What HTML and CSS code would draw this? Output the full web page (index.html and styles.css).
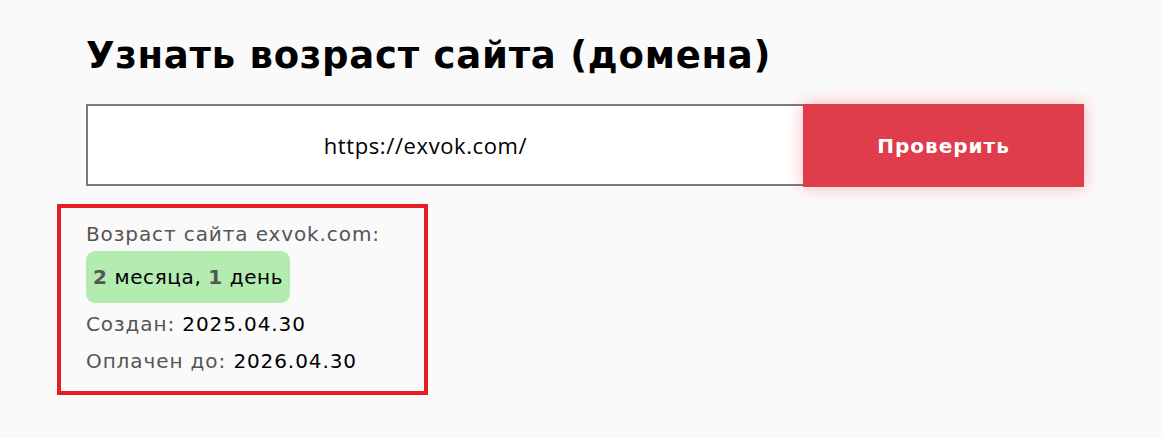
FILE: index.html
```html
<!DOCTYPE html>
<html lang="ru">
<head>
    <meta charset="UTF-8">
    <meta name="viewport" content="width=device-width, initial-scale=1.0">
    <title>Узнать возраст сайта</title>
    <link rel="stylesheet" href="styles.css">
</head>
<body>

<div class="page">
    <h1 class="title">Узнать возраст сайта (домена)</h1>

    <form class="checkForm" onsubmit="return false">
        <input type="text" class="domainInput" value="https://exvok.com/">
        <button type="submit" class="checkButton">Проверить</button>
    </form>

    <div class="result">
        <div class="resultLabel">Возраст сайта exvok.com:</div>
        <div class="ageBadge"><b>2</b> месяца, <b>1</b> день</div>
        <div class="resultRow">Создан: <span class="value">2025.04.30</span></div>
        <div class="resultRow">Оплачен до: <span class="value">2026.04.30</span></div>
    </div>
</div>

</body>
</html>
```

FILE: styles.css
```css
body {
    background: #fafafa;
    margin: 0;
    padding: 0;
    font-family: "DejaVu Sans", sans-serif;
    color: #000;
}

.page {
    padding: 26px 0 0 86px;
    width: 998px;
}

.title {
    font-size: 37px;
    font-weight: 700;
    letter-spacing: 0.75px;
    margin: 0 0 18px 0;
    line-height: 60px;
}

.checkForm {
    display: flex;
    height: 83px;
}

.domainInput {
    flex: 1;
    box-sizing: border-box;
    height: 82px;
    border: 2px solid #7a7a7a;
    border-right: none;
    background: #fff;
    font-family: "Open Sans", sans-serif;
    font-size: 22px;
    letter-spacing: 0.6px;
    text-align: center;
    padding: 0 40px 0 0;
    color: #000;
    outline: none;
}

.checkButton {
    width: 281px;
    height: 83px;
    background-color: #df3c4c;
    color: #fff;
    border: none;
    font-family: "DejaVu Sans", sans-serif;
    font-size: 20px;
    font-weight: 700;
    letter-spacing: 1px;
    box-shadow: 0 0 16px rgba(240, 60, 70, 0.35);
    cursor: pointer;
}

.result {
    display: inline-flex;
    flex-direction: column;
    align-items: flex-start;
    margin: 17px 0 0 -29px;
    padding: 13px 44px 11px 25px;
    border: 4px solid #e81c24;
    font-size: 20px;
    letter-spacing: 0.9px;
    color: #555;
}

.resultLabel {
    line-height: 26px;
}

.ageBadge {
    margin: 4px 0 3px 0;
    background: #b3ebb0;
    border-radius: 9px;
    padding: 0 7px;
    height: 52px;
    line-height: 52px;
    font-size: 20px;
    letter-spacing: 0.6px;
    color: #000;
}

.ageBadge b {
    color: #555;
}

.resultRow {
    line-height: 37px;
}

.value {
    color: #000;
}
```
